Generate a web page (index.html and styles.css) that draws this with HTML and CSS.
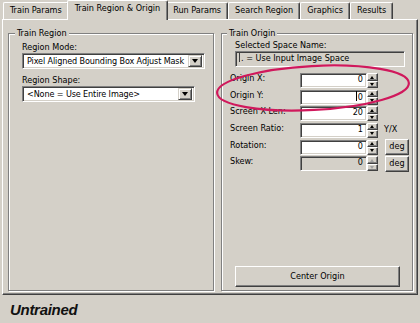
FILE: index.html
```html
<html>
    <head>
        <meta charset='utf-8'/>
        <title>Train Region &amp; Origin</title>
        <link rel="stylesheet" href="styles.css">
    </head>
    <body>
        <div class="dialog">
            <div class="tabs">
                <div class="tab">Train Params</div>
                <div class="tab active">Train Region &amp; Origin</div>
                <div class="tab">Run Params</div>
                <div class="tab">Search Region</div>
                <div class="tab">Graphics</div>
                <div class="tab">Results</div>
            </div>

            <div class="panel">
                <fieldset class="group region">
                    <legend>Train Region</legend>
                    <div class="label first">Region Mode:</div>
                    <div class="combo mode"><span class="combo_text">Pixel Aligned Bounding Box Adjust Mask</span><span class="drop"></span></div>
                    <div class="label">Region Shape:</div>
                    <div class="combo shape"><span class="combo_text">&lt;None = Use Entire Image&gt;</span><span class="drop"></span></div>
                </fieldset>

                <fieldset class="group origin">
                    <legend>Train Origin</legend>
                    <div class="label space">Selected Space Name:</div>
                    <div class="space_box"><span class="cut"></span>. = Use Input Image Space</div>

                    <div class="rows">
                        <div class="row">
                            <span class="row_label">Origin X:</span>
                            <span class="edit">0</span>
                            <span class="spin"><span class="up"></span><span class="down"></span></span>
                        </div>
                        <div class="row">
                            <span class="row_label">Origin Y:</span>
                            <span class="edit"><span class="caret"></span>0</span>
                            <span class="spin"><span class="up"></span><span class="down"></span></span>
                        </div>
                        <div class="row">
                            <span class="row_label">Screen X Len:</span>
                            <span class="edit">20</span>
                            <span class="spin"><span class="up"></span><span class="down"></span></span>
                        </div>
                        <div class="row">
                            <span class="row_label">Screen Ratio:</span>
                            <span class="edit">1</span>
                            <span class="spin"><span class="up"></span><span class="down"></span></span>
                            <span class="unit">Y/X</span>
                        </div>
                        <div class="row">
                            <span class="row_label">Rotation:</span>
                            <span class="edit">0</span>
                            <span class="spin"><span class="up"></span><span class="down"></span></span>
                            <span class="btn deg">deg</span>
                        </div>
                        <div class="row disabled">
                            <span class="row_label">Skew:</span>
                            <span class="edit">0</span>
                            <span class="spin"><span class="up"></span><span class="down"></span></span>
                            <span class="btn deg">deg</span>
                        </div>
                    </div>

                    <div class="btn center">Center Origin</div>
                </fieldset>
            </div>

            <div class="status">Untrained</div>

            <!-- red marker round the origin fields -->
            <svg class="mark" width="420" height="323" viewBox="0 0 420 323">
                <ellipse cx="313" cy="88" rx="96" ry="22" transform="rotate(-3 313 88)" fill="none" stroke="#d0185c" stroke-width="2.2"/>
            </svg>
        </div>
    </body>
</html>
```

FILE: styles.css
```css
body{margin: 0; background-color: #d4d0c8; color: #000; font-family: "DejaVu Sans Condensed", "DejaVu Sans", sans-serif; font-stretch: condensed; font-size: 9px;}
.dialog{position: relative; width: 420px; height: 323px; overflow: hidden;}

/* tab strip */
.tabs{display: flex; align-items: flex-end; height: 19px; padding-left: 3px;}
.tab{height: 16px; line-height: 15px; padding: 0 6px; border: 1px solid #fff; border-bottom: none; border-right-color: #404040; box-shadow: inset -1px 0 #808080; border-radius: 2px 2px 0 0;}
.tab.active{position: relative; z-index: 1; height: 19px; line-height: 15px; margin: 0 -2px -1px; padding: 0 7px; background-color: #d4d0c8;}

/* tab page */
.panel{display: flex; gap: 7px; box-sizing: border-box; width: 416px; height: 276px; margin-left: 2px; padding: 0 4px 0 5px; border: 1px solid #fff; border-right-color: #404040; border-bottom-color: #404040; box-shadow: inset -1px -1px #808080;}
.group{display: flex; flex-direction: column; box-sizing: border-box; min-width: 0; margin: 7px 0 3px; padding: 0; border: 1px solid #808080; box-shadow: inset 1px 1px #fff, 1px 1px #fff;}
.group legend{padding: 0 2px; line-height: 12px; background-color: #d4d0c8;}
.region{width: 206px; padding-left: 13px;}
.region legend{margin-left: -7px;}
.origin{width: 192px; padding-left: 8px;}
.origin legend{margin-left: -3px;}

.label{line-height: 11px; margin-top: 6px;}
.label.first{margin-top: 3px;}
.label.space{margin: 0 0 0 5px; line-height: 12px;}

/* sunken 3d boxes */
.combo, .edit, .space_box{box-sizing: border-box; border: 1px solid; border-color: #808080 #fff #fff #808080; box-shadow: inset 1px 1px #404040, inset -1px -1px #d4d0c8;}
.combo{display: flex; align-items: center; height: 16px; padding: 2px; background-color: #fff;}
.combo.mode{width: 183px;}
.combo.shape{width: 173px;}
.combo_text{flex: 1; padding-left: 2px; white-space: nowrap; overflow: hidden; letter-spacing: -0.12px;}
.drop{position: relative; width: 14px; height: 12px; box-sizing: border-box; background-color: #d4d0c8; border: 1px solid; border-color: #d4d0c8 #404040 #404040 #d4d0c8; box-shadow: inset 1px 1px #fff, inset -1px -1px #808080;}
.drop::after{content: ""; position: absolute; left: 3px; top: 3px; border-left: 3.5px solid transparent; border-right: 3.5px solid transparent; border-top: 4px solid #000;}

.space_box{width: 170px; height: 16px; margin-left: 5px; padding: 0 3px; line-height: 13px; white-space: nowrap; overflow: hidden;}
.cut{display: inline-block; width: 1px; height: 9px; margin-right: 1px; background-color: #404040; vertical-align: -1px;}

/* numeric rows */
.rows{display: grid; grid-auto-rows: 15px; row-gap: 1.65px; margin-top: 6px;}
.row{display: flex; align-items: center;}
.row_label{width: 70px; align-self: flex-start; margin-top: -1px; line-height: 12px;}
.edit{position: relative; width: 67px; height: 15px; padding-right: 3px; line-height: 11px; text-align: right; background-color: #fff;}
.caret{display: inline-block; width: 1px; height: 10px; margin-right: 1px; background-color: #000; vertical-align: -1px;}
.spin{display: flex; flex-direction: column; width: 11px; height: 15px;}
.spin span{position: relative; flex: 1; box-sizing: border-box; border: 1px solid; border-color: #fff #404040 #404040 #fff; box-shadow: inset -1px -1px #808080; background-color: #d4d0c8;}
.spin .up::after, .spin .down::after{content: ""; position: absolute; left: 2px; top: 1.5px; border-left: 2.5px solid transparent; border-right: 2.5px solid transparent;}
.spin .up::after{border-bottom: 3px solid #000;}
.spin .down::after{border-top: 3px solid #000; top: 1px;}
.unit{margin-left: 6px; line-height: 12px; margin-top: -2px;}

.btn{box-sizing: border-box; border: 1px solid; border-color: #fff #404040 #404040 #fff; box-shadow: inset -1px -1px #808080; text-align: center; background-color: #d4d0c8;}
.deg{width: 24px; height: 16px; margin-left: 7px; line-height: 13px;}

.disabled .edit{background-color: #d4d0c8;}
.disabled .spin .up::after{border-bottom-color: #a0a0a0;}
.disabled .spin .down::after{border-top-color: #a0a0a0;}

.center{width: 165px; height: 21px; margin: auto 0 3px 5px; line-height: 18px;}

.status{padding-left: 10px; margin-top: 6px; line-height: 18px; font-family: "Liberation Sans", Arial, sans-serif; font-size: 15px; font-weight: bold; font-style: italic; letter-spacing: -0.3px; color: #111;}

.mark{position: absolute; left: 0; top: 0; pointer-events: none;}
```
